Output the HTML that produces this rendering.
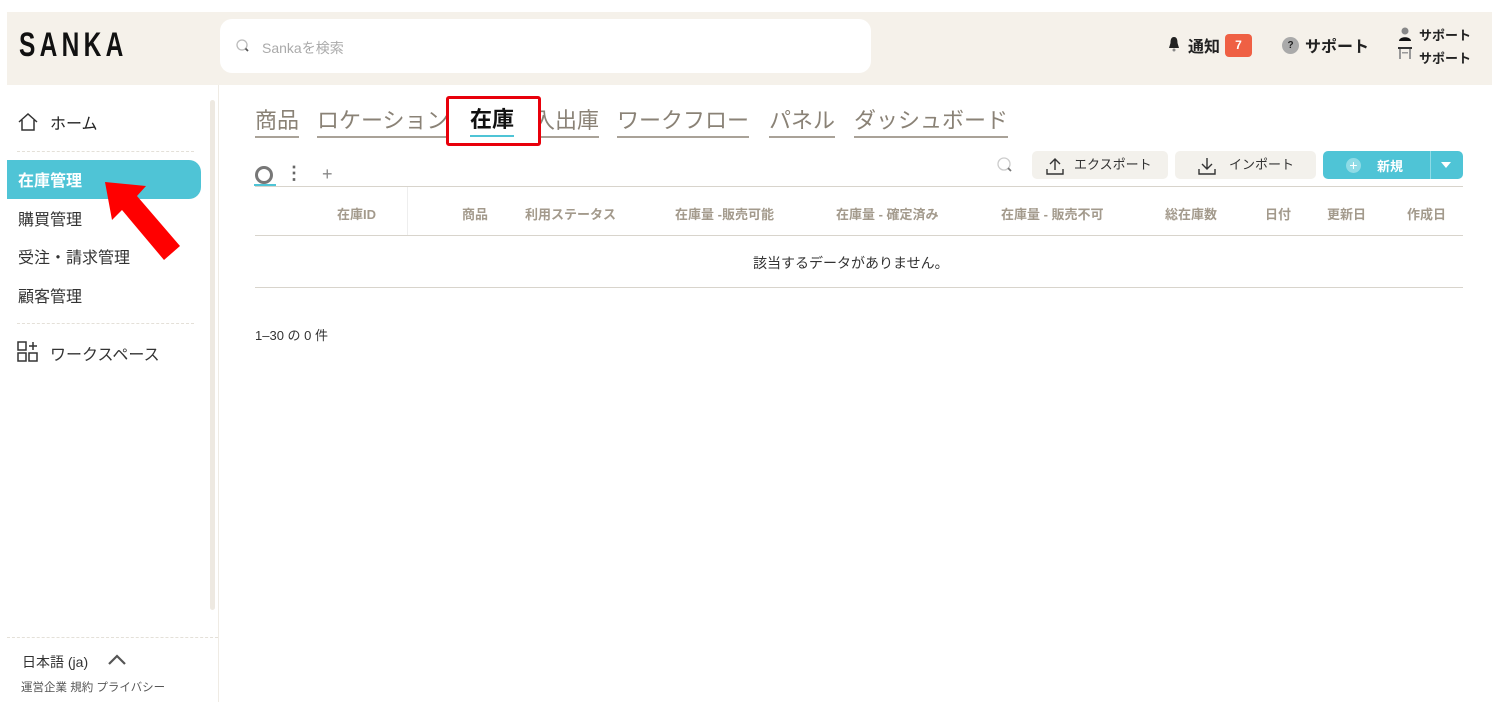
<!DOCTYPE html>
<html><head><meta charset="utf-8"><style>
*{margin:0;padding:0;box-sizing:border-box}
body{width:1500px;height:702px;background:#fff;font-family:"Liberation Sans","Noto Sans CJK JP",sans-serif;position:relative;overflow:hidden;color:#222}
.a{position:absolute;white-space:nowrap}
.hdr{left:7px;top:12px;width:1485px;height:73px;background:#f5f1ea}
.tab{font-size:22px;color:#8a8276;top:106px;border-bottom:2px solid #a9a298;line-height:30px}
.th{font-size:13px;color:#a39a8c;top:204px;font-weight:bold}
.btn{background:#f3f1ec;border-radius:5px;height:28px;top:151px;font-size:13px;color:#333;line-height:28px}
</style></head><body>
<div class="a hdr"></div>
<div class="a" style="left:19px;top:27px;font-size:34px;line-height:36px;font-weight:bold;letter-spacing:6px;color:#111;transform:scaleX(0.72);transform-origin:left">SANKA</div>
<div class="a" style="left:220px;top:19px;width:651px;height:54px;background:#fff;border-radius:12px"></div>
<svg class="a" style="left:235px;top:38px" width="16" height="16"><circle cx="7" cy="7" r="5" fill="none" stroke="#bbb" stroke-width="1.3"/><line x1="10.5" y1="10.5" x2="13" y2="13" stroke="#555" stroke-width="1.8"/></svg>
<div class="a" style="left:262px;top:38px;font-size:14px;color:#aaa">Sankaを検索</div>
<svg class="a" style="left:1167px;top:36px" width="14" height="16"><path d="M7 1C4 1 3.5 4 3.5 7L2 12H12L10.5 7C10.5 4 10 1 7 1Z" fill="#222"/><circle cx="7" cy="14" r="1.5" fill="#888"/></svg>
<div class="a" style="left:1188px;top:33px;font-size:16px;font-weight:bold">通知</div>
<div class="a" style="left:1225px;top:34px;width:27px;height:23px;background:#ef6044;border-radius:4px;color:#fff;font-size:12px;font-weight:bold;text-align:center;line-height:23px">7</div>
<div class="a" style="left:1282px;top:37px;width:17px;height:17px;border-radius:50%;background:#aaa;color:#222;font-size:10px;text-align:center;line-height:17px;font-weight:bold">?</div>
<div class="a" style="left:1305px;top:33px;font-size:16px;font-weight:bold">サポート</div>
<svg class="a" style="left:1397px;top:27px" width="18" height="40"><circle cx="8" cy="4" r="3.5" fill="#888"/><path d="M2 14C2 9 14 9 14 14Z" fill="#111"/><rect x="1" y="20" width="14" height="2" fill="#333"/><rect x="2" y="22" width="2" height="10" fill="#999"/><rect x="12" y="22" width="2" height="10" fill="#999"/><rect x="5" y="25" width="6" height="1.5" fill="#999"/></svg>
<div class="a" style="left:1419px;top:25px;font-size:13px;font-weight:bold">サポート</div>
<div class="a" style="left:1419px;top:48px;font-size:13px;font-weight:bold">サポート</div>

<div class="a" style="left:218px;top:85px;width:1px;height:617px;background:#efebe4"></div>
<div class="a" style="left:210px;top:100px;width:5px;height:510px;background:#eee9e1;border-radius:3px"></div>
<svg class="a" style="left:17px;top:112px" width="22" height="20"><path d="M2 10L11 2L20 10M5 8V18H17V8" fill="none" stroke="#333" stroke-width="1.5"/></svg>
<div class="a" style="left:50px;top:110px;font-size:16px">ホーム</div>
<div class="a" style="left:17px;top:151px;width:177px;border-top:1px dashed #e4e0d8"></div>
<div class="a" style="left:7px;top:160px;width:194px;height:39px;background:#4fc4d6;border-radius:0 12px 12px 0"></div>
<div class="a" style="left:18px;top:167px;font-size:16px;color:#fff;font-weight:bold">在庫管理</div>
<div class="a" style="left:18px;top:206px;font-size:16px;color:#333">購買管理</div>
<div class="a" style="left:18px;top:244px;font-size:16px;color:#333">受注・請求管理</div>
<div class="a" style="left:18px;top:283px;font-size:16px;color:#333">顧客管理</div>
<div class="a" style="left:17px;top:323px;width:177px;border-top:1px dashed #e4e0d8"></div>
<svg class="a" style="left:17px;top:341px" width="22" height="22"><rect x="1" y="1" width="8" height="8" fill="none" stroke="#333" stroke-width="1.5"/><rect x="1" y="12" width="8" height="8" fill="none" stroke="#333" stroke-width="1.5"/><rect x="12" y="12" width="8" height="8" fill="none" stroke="#333" stroke-width="1.5"/><path d="M16 1V9M12 5H20" stroke="#333" stroke-width="1.5"/></svg>
<div class="a" style="left:50px;top:341px;font-size:16px;color:#333">ワークスペース</div>
<svg class="a" style="left:100px;top:176px" width="86" height="88"><polygon points="5,6 46,10 37,20 80,70 64,84 22,34 12,44" fill="#f00"/></svg>
<div class="a" style="left:7px;top:637px;width:211px;border-top:1px dashed #e4e0d8"></div>
<div class="a" style="left:22px;top:652px;font-size:14px;color:#333">日本語 (ja)</div>
<svg class="a" style="left:107px;top:654px" width="20" height="12"><path d="M2 10L10 2L18 10" fill="none" stroke="#555" stroke-width="2.2"/></svg>
<div class="a" style="left:21px;top:679px;font-size:11.5px;color:#555">運営企業 規約 プライバシー</div>

<div class="a tab" style="left:255px">商品</div>
<div class="a tab" style="left:317px">ロケーション</div>
<div class="a tab" style="left:533px">入出庫</div>
<div class="a tab" style="left:617px">ワークフロー</div>
<div class="a tab" style="left:769px">パネル</div>
<div class="a tab" style="left:854px">ダッシュボード</div>
<div class="a" style="left:446px;top:96px;width:95px;height:50px;border:3px solid #e8000b;border-radius:3px;background:#fff"></div>
<div class="a" style="left:470px;top:105px;font-size:22px;line-height:30px;color:#111;font-weight:bold">在庫</div>
<div class="a" style="left:470px;top:135px;width:44px;height:2px;background:#4fc4d6"></div>
<div class="a" style="left:255px;top:166px;width:18px;height:18px;border:3px solid #777;border-radius:50%"></div>
<div class="a" style="left:254px;top:184px;width:22px;height:2px;background:#4fc4d6"></div>
<div class="a" style="left:285px;top:163px;font-size:18px;color:#666;font-weight:bold">⋮</div>
<div class="a" style="left:322px;top:164px;font-size:18px;color:#888">+</div>
<svg class="a" style="left:996px;top:156px" width="18" height="18"><circle cx="8" cy="8" r="6" fill="none" stroke="#ccc" stroke-width="1.3"/><line x1="12" y1="12" x2="15" y2="15" stroke="#777" stroke-width="1.8"/></svg>
<div class="a btn" style="left:1032px;width:136px;padding-left:42px">エクスポート</div>
<svg class="a" style="left:1045px;top:156px" width="20" height="20"><path d="M10 14V3M5 8L10 3L15 8M2 13V18H18V13" fill="none" stroke="#333" stroke-width="1.4"/></svg>
<div class="a btn" style="left:1175px;width:141px;padding-left:54px">インポート</div>
<svg class="a" style="left:1197px;top:156px" width="20" height="20"><path d="M10 2V13M5 8L10 13L15 8M2 13V18H18V13" fill="none" stroke="#333" stroke-width="1.4"/></svg>
<div class="a" style="left:1323px;top:151px;width:140px;height:28px;background:#4fc4d6;border-radius:5px"></div>
<div class="a" style="left:1430px;top:151px;width:1px;height:28px;background:#8fdbe6"></div>
<div class="a" style="left:1346px;top:158px;width:15px;height:15px;border-radius:50%;background:#8fdbe6;color:#fff;font-size:14px;line-height:14px;text-align:center">+</div>
<div class="a" style="left:1377px;top:156px;font-size:13px;color:#fff;font-weight:bold">新規</div>
<svg class="a" style="left:1440px;top:160px" width="12" height="10"><path d="M1 2H11L6 8Z" fill="#fff"/></svg>

<div class="a" style="left:255px;top:186px;width:1208px;height:1px;background:#d8d4cc"></div>
<div class="a" style="left:407px;top:187px;width:1px;height:48px;background:#eee"></div>
<div class="a th" style="left:337px">在庫ID</div>
<div class="a th" style="left:462px">商品</div>
<div class="a th" style="left:525px">利用ステータス</div>
<div class="a th" style="left:675px">在庫量 -販売可能</div>
<div class="a th" style="left:836px">在庫量 - 確定済み</div>
<div class="a th" style="left:1001px">在庫量 - 販売不可</div>
<div class="a th" style="left:1165px">総在庫数</div>
<div class="a th" style="left:1265px">日付</div>
<div class="a th" style="left:1327px">更新日</div>
<div class="a th" style="left:1407px">作成日</div>
<div class="a" style="left:255px;top:235px;width:1208px;height:1px;background:#d8d4cc"></div>
<div class="a" style="left:753px;top:253px;font-size:14px;color:#333">該当するデータがありません。</div>
<div class="a" style="left:255px;top:287px;width:1208px;height:1px;background:#d8d4cc"></div>
<div class="a" style="left:255px;top:325px;font-size:13px;color:#333">1–30 の 0 件</div>
</body></html>
